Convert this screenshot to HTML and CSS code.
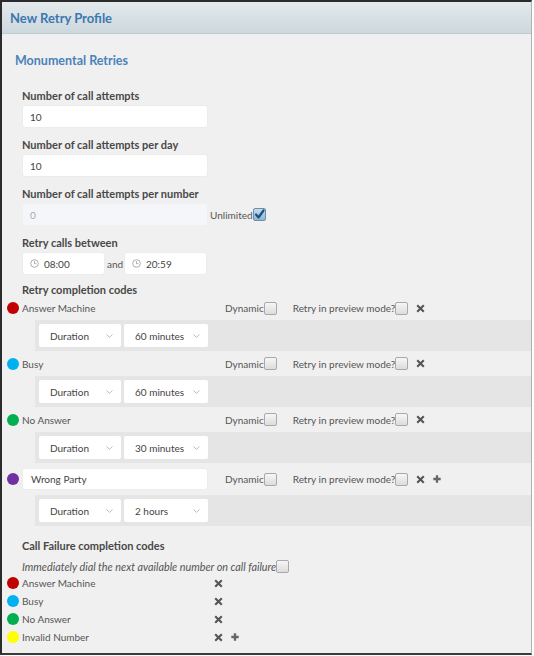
FILE: index.html
```html
<!DOCTYPE html>
<html>
<head>
<meta charset="utf-8">
<link rel="stylesheet" href="styles.css">
</head>
<body>
<div class="frame">
  <div class="header"><h1 class="title">New Retry Profile</h1></div>
  <div class="content">
    <h2 class="section">Monumental Retries</h2>

    <div class="field">
      <div class="label">Number of call attempts</div>
      <div class="input">10</div>
    </div>
    <div class="field">
      <div class="label">Number of call attempts per day</div>
      <div class="input">10</div>
    </div>
    <div class="field">
      <div class="label">Number of call attempts per number</div>
      <div class="inline">
        <div class="input disabled">0</div>
        <span class="unl">Unlimited</span>
        <span class="cb checked"><svg width="13" height="13" viewBox="0 0 13 13"><path d="M3 6.5 L5.5 9.5 L10.5 2.5" fill="none" stroke="#1f4f7a" stroke-width="2.2" stroke-linecap="round" stroke-linejoin="round"/></svg></span>
      </div>
    </div>
    <div class="field">
      <div class="label">Retry calls between</div>
      <div class="inline">
        <div class="time"><svg class="clock" width="9" height="9" viewBox="0 0 9 9"><circle cx="4.5" cy="4.5" r="3.8" fill="none" stroke="#999" stroke-width="0.8"/><path d="M4.5 2.2 V4.7 H6.4" fill="none" stroke="#999" stroke-width="0.8"/></svg><span>08:00</span></div>
        <span class="and">and</span>
        <div class="time t2"><svg class="clock" width="9" height="9" viewBox="0 0 9 9"><circle cx="4.5" cy="4.5" r="3.8" fill="none" stroke="#999" stroke-width="0.8"/><path d="M4.5 2.2 V4.7 H6.4" fill="none" stroke="#999" stroke-width="0.8"/></svg><span>20:59</span></div>
      </div>
    </div>

    <div class="label codes-label">Retry completion codes</div>

    <div class="code first">
      <div class="namecol"><span class="dot red"></span><span class="name">Answer Machine</span></div>
      <span class="opt">Dynamic<span class="cb"></span></span>
      <span class="opt preview">Retry in preview mode?<span class="cb"></span></span>
      <svg class="x" width="9" height="9" viewBox="0 0 9 9"><path d="M1.2 1.2 L7.8 7.8 M7.8 1.2 L1.2 7.8" stroke="#555" stroke-width="2.1"/></svg>
    </div>
    <div class="band">
      <div class="select s1">Duration<svg class="chev" width="7" height="4" viewBox="0 0 7 4"><path d="M0.5 0.5 L3.5 3.3 L6.5 0.5" fill="none" stroke="#aaa" stroke-width="0.8"/></svg></div>
      <div class="select s2">60 minutes<svg class="chev" width="7" height="4" viewBox="0 0 7 4"><path d="M0.5 0.5 L3.5 3.3 L6.5 0.5" fill="none" stroke="#aaa" stroke-width="0.8"/></svg></div>
    </div>

    <div class="code">
      <div class="namecol"><span class="dot blue"></span><span class="name">Busy</span></div>
      <span class="opt">Dynamic<span class="cb"></span></span>
      <span class="opt preview">Retry in preview mode?<span class="cb"></span></span>
      <svg class="x" width="9" height="9" viewBox="0 0 9 9"><path d="M1.2 1.2 L7.8 7.8 M7.8 1.2 L1.2 7.8" stroke="#555" stroke-width="2.1"/></svg>
    </div>
    <div class="band">
      <div class="select s1">Duration<svg class="chev" width="7" height="4" viewBox="0 0 7 4"><path d="M0.5 0.5 L3.5 3.3 L6.5 0.5" fill="none" stroke="#aaa" stroke-width="0.8"/></svg></div>
      <div class="select s2">60 minutes<svg class="chev" width="7" height="4" viewBox="0 0 7 4"><path d="M0.5 0.5 L3.5 3.3 L6.5 0.5" fill="none" stroke="#aaa" stroke-width="0.8"/></svg></div>
    </div>

    <div class="code">
      <div class="namecol"><span class="dot green"></span><span class="name">No Answer</span></div>
      <span class="opt">Dynamic<span class="cb"></span></span>
      <span class="opt preview">Retry in preview mode?<span class="cb"></span></span>
      <svg class="x" width="9" height="9" viewBox="0 0 9 9"><path d="M1.2 1.2 L7.8 7.8 M7.8 1.2 L1.2 7.8" stroke="#555" stroke-width="2.1"/></svg>
    </div>
    <div class="band">
      <div class="select s1">Duration<svg class="chev" width="7" height="4" viewBox="0 0 7 4"><path d="M0.5 0.5 L3.5 3.3 L6.5 0.5" fill="none" stroke="#aaa" stroke-width="0.8"/></svg></div>
      <div class="select s2">30 minutes<svg class="chev" width="7" height="4" viewBox="0 0 7 4"><path d="M0.5 0.5 L3.5 3.3 L6.5 0.5" fill="none" stroke="#aaa" stroke-width="0.8"/></svg></div>
    </div>

    <div class="code tall">
      <div class="namecol"><span class="dot purple"></span><div class="input wp">Wrong Party</div></div>
      <span class="opt">Dynamic<span class="cb"></span></span>
      <span class="opt preview">Retry in preview mode?<span class="cb"></span></span>
      <svg class="x" width="9" height="9" viewBox="0 0 9 9"><path d="M1.2 1.2 L7.8 7.8 M7.8 1.2 L1.2 7.8" stroke="#555" stroke-width="2.1"/></svg>
      <svg class="plus" width="8" height="8" viewBox="0 0 8 8"><path d="M4 0.3 V7.7 M0.3 4 H7.7" stroke="#666" stroke-width="2.3"/></svg>
    </div>
    <div class="band">
      <div class="select s1">Duration<svg class="chev" width="7" height="4" viewBox="0 0 7 4"><path d="M0.5 0.5 L3.5 3.3 L6.5 0.5" fill="none" stroke="#aaa" stroke-width="0.8"/></svg></div>
      <div class="select s2">2 hours<svg class="chev" width="7" height="4" viewBox="0 0 7 4"><path d="M0.5 0.5 L3.5 3.3 L6.5 0.5" fill="none" stroke="#aaa" stroke-width="0.8"/></svg></div>
    </div>

    <div class="label fail-label">Call Failure completion codes</div>
    <div class="immediate">Immediately dial the next available number on call failure<span class="cb"></span></div>

    <div class="frow">
      <div class="fcol"><span class="dot red"></span><span class="name">Answer Machine</span></div>
      <svg class="x" width="9" height="9" viewBox="0 0 9 9"><path d="M1.2 1.2 L7.8 7.8 M7.8 1.2 L1.2 7.8" stroke="#555" stroke-width="2.1"/></svg>
    </div>
    <div class="frow">
      <div class="fcol"><span class="dot blue"></span><span class="name">Busy</span></div>
      <svg class="x" width="9" height="9" viewBox="0 0 9 9"><path d="M1.2 1.2 L7.8 7.8 M7.8 1.2 L1.2 7.8" stroke="#555" stroke-width="2.1"/></svg>
    </div>
    <div class="frow">
      <div class="fcol"><span class="dot green"></span><span class="name">No Answer</span></div>
      <svg class="x" width="9" height="9" viewBox="0 0 9 9"><path d="M1.2 1.2 L7.8 7.8 M7.8 1.2 L1.2 7.8" stroke="#555" stroke-width="2.1"/></svg>
    </div>
    <div class="frow">
      <div class="fcol"><span class="dot yellow"></span><span class="name">Invalid Number</span></div>
      <svg class="x" width="9" height="9" viewBox="0 0 9 9"><path d="M1.2 1.2 L7.8 7.8 M7.8 1.2 L1.2 7.8" stroke="#555" stroke-width="2.1"/></svg>
      <svg class="plus" width="8" height="8" viewBox="0 0 8 8"><path d="M4 0.3 V7.7 M0.3 4 H7.7" stroke="#666" stroke-width="2.3"/></svg>
    </div>
  </div>
</div>
</body>
</html>
```
FILE: styles.css
```css
* { box-sizing: border-box; }
html, body { margin: 0; padding: 0; background: #ffffff; }
body { font-family: Lato, "Open Sans", sans-serif; font-size: 10px; color: #555; }

.frame {
  width: 532px;
  height: 655px;
  border-top: 2px solid #2b2b2b;
  border-left: 2px solid #2b2b2b;
  border-bottom: 2px solid #3a3a3a;
  border-right: 1px solid #b0b0b0;
  background: #f0f0f0;
  display: flex;
  flex-direction: column;
}

.header {
  height: 32px;
  flex: none;
  background: linear-gradient(#e3e9ec, #cdd8dd);
  border-bottom: 1px solid #bfc9ce;
  display: flex;
  align-items: center;
  padding-left: 8px;
}
.title { margin: 0; font-size: 13px; font-weight: bold; color: #3c78b0; }

.content { display: flex; flex-direction: column; }

.section {
  margin: 18px 0 0 13px;
  font-size: 12.5px;
  line-height: 18px;
  font-weight: bold;
  color: #4a82ba;
}

.field { padding-left: 20px; margin-bottom: 9px; }
.section + .field { margin-top: 18px; }

.label {
  font-size: 11px;
  line-height: 16px;
  font-weight: bold;
  color: #484848;
  margin-bottom: 1px;
}

.input {
  width: 186px;
  height: 23px;
  background: #fff;
  border-radius: 3px;
  border: 1px solid #ececec;
  padding-left: 7px;
  display: flex;
  align-items: center;
  font-size: 10px;
  color: #444;
}
.input.disabled { background: #f5f6f9; color: #aaa; border-color: #eef0f3; }

.inline { display: flex; align-items: center; }
.unl { margin-left: 2px; color: #555; }

.cb {
  display: inline-block;
  width: 13px;
  height: 13px;
  flex: none;
  border: 1px solid #a9a9a9;
  border-radius: 2px;
  background: linear-gradient(#f6f6f6, #dcdcdc);
  vertical-align: middle;
}
.cb.checked {
  border-color: #6f8ea8;
  background: linear-gradient(#c3dcef, #8fb5d6);
  position: relative;
}
.cb.checked svg { position: absolute; left: -1px; top: -1px; }

.time {
  width: 83px;
  height: 23px;
  background: #fff;
  border: 1px solid #ececec;
  border-radius: 3px;
  display: flex;
  align-items: center;
  padding-left: 7px;
  color: #444;
}
.time .clock { margin-right: 5px; }
.and { width: 19px; padding-left: 2px; color: #555; }

.codes-label { padding-left: 20px; margin-top: -2px; margin-bottom: 0; }

.code {
  height: 24px;
  display: flex;
  align-items: center;
  padding-left: 5px;
}
.code.first { margin-top: -2px; }
.band + .code { height: 25px; }
.code.tall { height: 32px; }

.namecol { width: 218px; flex: none; display: flex; align-items: center; }
.fcol { width: 199px; flex: none; display: flex; align-items: center; }

.dot {
  width: 12px;
  height: 12px;
  border-radius: 50%;
  flex: none;
  margin-right: 3px;
}
.red { background: #c00000; }
.blue { background: #00b0f0; }
.green { background: #00b050; }
.yellow { background: #ffff00; }
.purple { background: #7030a0; }

.name { color: #555; }
.input.wp { width: 186px; height: 22px; color: #444; padding-left: 8px; }

.opt { display: flex; align-items: center; color: #555; }
.preview { margin-left: 16px; }
.x { margin-left: 8px; flex: none; }
.plus { margin-left: 8px; flex: none; }

.band {
  margin-left: 33px;
  height: 31px;
  background: #e5e5e5;
  display: flex;
  align-items: center;
  padding-left: 4px;
  gap: 3px;
}
.select {
  height: 23px;
  background: #fff;
  border-radius: 2px;
  display: flex;
  align-items: center;
  padding-left: 11px;
  position: relative;
  color: #444;
}
.select.s1 { width: 82px; }
.select.s2 { width: 84px; }
.chev { position: absolute; right: 8px; top: 10px; }

.fail-label { padding-left: 20px; margin-top: 12px; margin-bottom: 0; }
.immediate {
  padding-left: 20px;
  margin-top: 4px;
  height: 16px;
  display: flex;
  align-items: center;
  font-style: italic;
  font-size: 10.8px;
  color: #555;
}
.frow {
  height: 18px;
  display: flex;
  align-items: center;
  padding-left: 5px;
}
```
